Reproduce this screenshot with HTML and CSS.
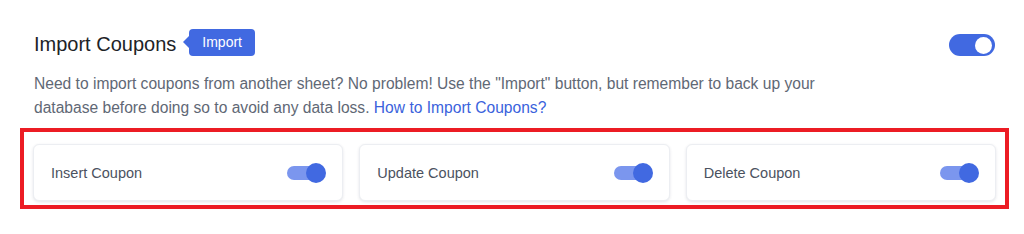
FILE: index.html
```html
<!DOCTYPE html>
<html>
<head>
<meta charset="utf-8">
<link rel="stylesheet" href="styles.css">
</head>
<body>
<div class="section">
  <div class="head">
    <div class="title-group">
      <h2 class="title">Import Coupons</h2>
      <span class="badge">Import</span>
    </div>
    <span class="toggle-lg"><span class="knob-lg"></span></span>
  </div>
  <p class="desc"><span class="desc-text">Need to import coupons from another sheet? No problem! Use the "Import" button, but remember to back up your database before doing so to avoid any data loss.</span> <a class="link" href="#">How to Import Coupons?</a></p>
</div>
<div class="annot">
  <div class="cards">
    <div class="card"><span class="label">Insert Coupon</span><span class="toggle-sm"><span class="knob-sm"></span></span></div>
    <div class="card"><span class="label">Update Coupon</span><span class="toggle-sm"><span class="knob-sm"></span></span></div>
    <div class="card"><span class="label">Delete Coupon</span><span class="toggle-sm"><span class="knob-sm"></span></span></div>
  </div>
</div>
</body>
</html>
```
FILE: styles.css
```css
* { box-sizing: border-box; }
html, body { margin: 0; padding: 0; background: #fff; }
body { font-family: "Liberation Sans", Arial, sans-serif; width: 1024px; height: 234px; overflow: hidden; }

.section { padding: 29px 29px 0 34px; }

.head { display: flex; align-items: center; justify-content: space-between; height: 30px; }
.title-group { display: flex; align-items: center; }
.title { margin: 0; font-size: 20px; font-weight: 400; color: #1d2327; line-height: 30px; }
.badge {
  position: relative;
  margin-left: 13px;
  margin-top: -4px;
  height: 27px;
  line-height: 27px;
  padding: 0 13px;
  background: #4169e1;
  color: #fff;
  font-size: 14px;
  border-radius: 4px;
}
.badge::before {
  content: "";
  position: absolute;
  left: -6px;
  top: 50%;
  margin-top: -6px;
  border-top: 6px solid transparent;
  border-bottom: 6px solid transparent;
  border-right: 6px solid #4169e1;
}

.toggle-lg {
  display: flex; align-items: center; justify-content: flex-end;
  width: 46px; height: 22px; border-radius: 11px;
  background: #4169e1; padding: 0 3px; margin-top: 2px;
}
.knob-lg { width: 17px; height: 17px; border-radius: 50%; background: #fff; }

.desc { margin: 13px 0 0; font-size: 15.6px; line-height: 24px; color: #5f6875; max-width: 830px; }
.link { color: #3a62dc; text-decoration: none; }

.annot {
  margin: 8px 15px 0 20px;
  border: 4px solid #ec1c24;
  padding: 12px 9px 4px 9px;
}
.cards { display: grid; grid-template-columns: repeat(3, 1fr); gap: 16px; }
.card {
  height: 57px;
  display: flex; align-items: center; justify-content: space-between;
  padding: 0 16px 0 17px;
  background: #fff;
  border: 1px solid #eceef2;
  border-radius: 6px;
  box-shadow: 0 1px 3px rgba(30, 40, 70, 0.12);
}
.label { font-size: 14.5px; color: #4b5260; }
.toggle-sm {
  position: relative;
  width: 39px; height: 20px;
  display: flex; align-items: center;
}
.toggle-sm::before {
  content: "";
  position: absolute; left: 0; top: 3px;
  width: 34px; height: 14px; border-radius: 7px;
  background: #7b96ee;
}
.knob-sm {
  position: absolute; right: 0; top: 0;
  width: 20px; height: 20px; border-radius: 50%;
  background: #4169e1;
}
```
